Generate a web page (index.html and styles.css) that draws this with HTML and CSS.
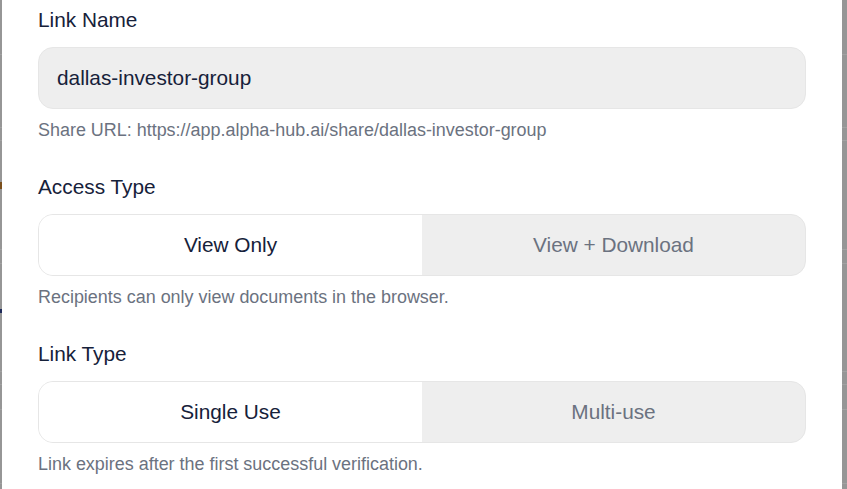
FILE: index.html
```html
<!DOCTYPE html>
<html lang="en">
<head>
<meta charset="utf-8">
<title>Share Link</title>
<link rel="stylesheet" href="styles.css">
</head>
<body>
<div class="page">
  <div class="edge edge-left"></div>
  <div class="modal">
    <div class="field">
      <div class="label">Link Name</div>
      <input class="text-input" type="text" value="dallas-investor-group" readonly>
      <div class="hint">Share URL: https://app.alpha-hub.ai/share/dallas-investor-group</div>
    </div>
    <div class="field">
      <div class="label">Access Type</div>
      <div class="segmented">
        <button class="seg active" type="button">View Only</button>
        <button class="seg" type="button">View + Download</button>
      </div>
      <div class="hint">Recipients can only view documents in the browser.</div>
    </div>
    <div class="field">
      <div class="label">Link Type</div>
      <div class="segmented">
        <button class="seg active" type="button">Single Use</button>
        <button class="seg" type="button">Multi-use</button>
      </div>
      <div class="hint">Link expires after the first successful verification.</div>
    </div>
  </div>
  <div class="edge edge-right"></div>
</div>
</body>
</html>
```
FILE: styles.css
```css
html, body {
  margin: 0;
  padding: 0;
  height: 100%;
  overflow: hidden;
  background: #969696;
  font-family: "Liberation Sans", Arial, sans-serif;
}

.page {
  display: flex;
  height: 489px;
}

.edge {
  background:
    linear-gradient(to bottom,
      transparent 0 54px, #a2a2a2 54px 55px,
      transparent 55px 127px, #a2a2a2 127px 128px,
      transparent 128px 140px, #a2a2a2 140px 141px,
      transparent 141px 249px, #a2a2a2 249px 250px,
      transparent 250px 263px, #a2a2a2 263px 264px,
      transparent 264px 371px, #a2a2a2 371px 372px,
      transparent 372px 384px, #a2a2a2 384px 385px,
      transparent 385px 409px, #a2a2a2 409px 410px,
      transparent 410px 483px, #a2a2a2 483px 484px,
      transparent 484px),
    #969696;
}

.edge-left {
  width: 2px;
  flex: none;
  background:
    linear-gradient(to bottom,
      transparent 0 182px, #7a4f1c 182px 189px,
      transparent 189px 309px, #1e2a5a 309px 313px,
      transparent 313px),
    linear-gradient(to bottom,
      transparent 0 54px, #a2a2a2 54px 55px,
      transparent 55px 127px, #a2a2a2 127px 128px,
      transparent 128px 140px, #a2a2a2 140px 141px,
      transparent 141px 249px, #a2a2a2 249px 250px,
      transparent 250px 263px, #a2a2a2 263px 264px,
      transparent 264px 371px, #a2a2a2 371px 372px,
      transparent 372px 384px, #a2a2a2 384px 385px,
      transparent 385px 409px, #a2a2a2 409px 410px,
      transparent 410px 483px, #a2a2a2 483px 484px,
      transparent 484px),
    #969696;
}

.edge-right {
  flex: 1;
}

.modal {
  width: 840px;
  flex: none;
  box-sizing: border-box;
  background: #ffffff;
  padding: 5px 36px 0;
}

.field {
  margin-bottom: 29px;
}

.label {
  font-size: 20.8px;
  line-height: 30px;
  color: #16213a;
  margin-bottom: 12px;
}

.text-input {
  display: block;
  width: 100%;
  height: 62px;
  box-sizing: border-box;
  margin: 0;
  padding: 0 18px;
  border: 1px solid #e6e6e6;
  border-radius: 15px;
  background: #eeeeee;
  font-family: inherit;
  font-size: 20.8px;
  color: #16213a;
  outline: none;
}

.hint {
  margin-top: 8px;
  font-size: 17.95px;
  line-height: 26px;
  color: #6b7280;
}

.segmented {
  display: grid;
  grid-template-columns: 1fr 1fr;
  height: 62px;
  box-sizing: border-box;
  border: 1px solid #e6e6e6;
  border-radius: 15px;
  overflow: hidden;
  background: #eeeeee;
}

.seg {
  display: flex;
  align-items: center;
  justify-content: center;
  margin: 0;
  padding: 0;
  border: none;
  background: transparent;
  font-family: inherit;
  font-size: 20.8px;
  color: #6b7280;
  cursor: pointer;
}

.seg.active {
  background: #ffffff;
  color: #16213a;
}
```
